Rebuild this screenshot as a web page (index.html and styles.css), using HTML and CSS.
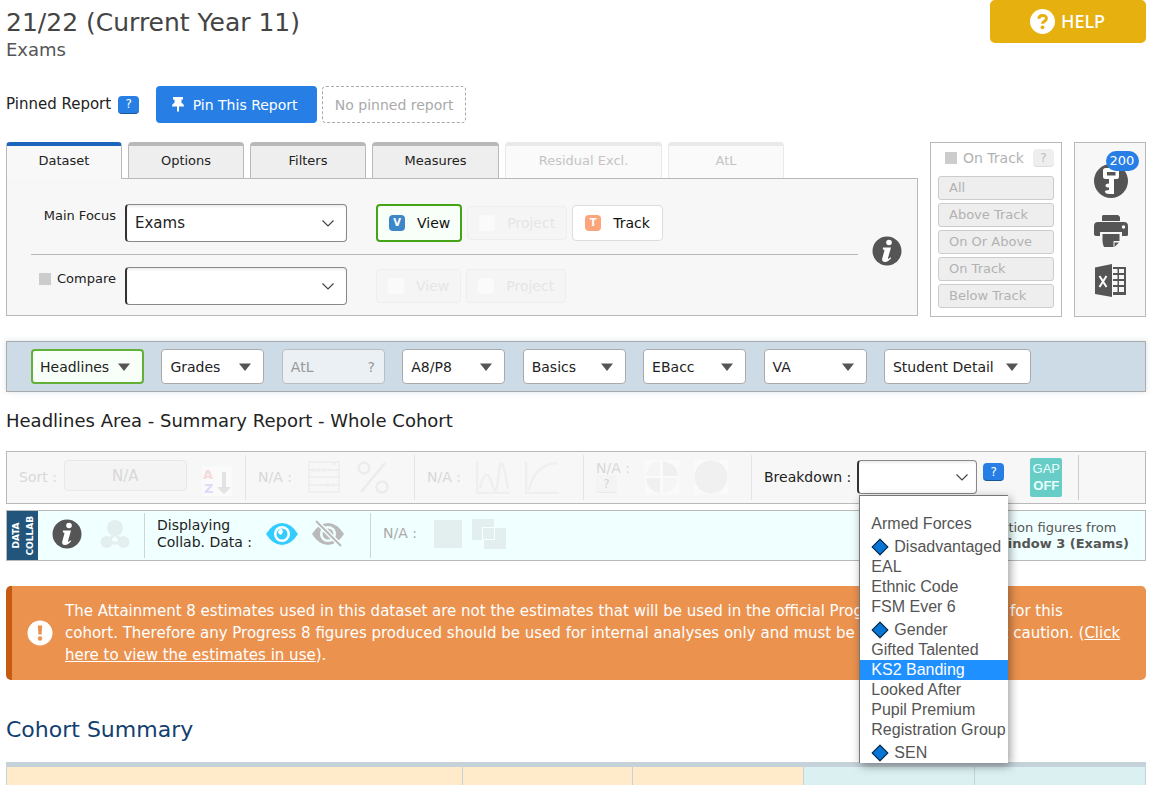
FILE: index.html
```html
<!DOCTYPE html>
<html lang="en">
<head>
<meta charset="utf-8">
<title>21/22 (Current Year 11) - Exams</title>
<link rel="stylesheet" href="styles.css">
</head>
<body>
<svg class="defs" aria-hidden="true">
  <symbol id="info" viewBox="0 0 30 30"><circle cx="15" cy="15" r="14.5" fill="#555"/><circle cx="17" cy="6.500" r="2.800" fill="#fff"/><path d="M11 11.500h8l-3 10.500c-.3 1.300.6 1 2.400-.8l.8.8c-2 2.800-4 4-6.200 4-2.500 0-3.300-1.500-2.700-3.800l2-7.200c.3-1.200 0-1.500-1.500-1.500z" fill="#fff"/></symbol>
  <symbol id="caret" viewBox="0 0 12 8"><path d="M0 .5h12L6 8z" fill="#555"/></symbol>
</svg>
<header class="top">
  <div>
    <h1>21/22 (Current Year 11)</h1>
    <p class="sub">Exams</p>
  </div>
  <button class="help" type="button"><svg width="25" height="25" viewBox="0 0 25 25"><circle cx="12.500" cy="12.500" r="12.500" fill="#fff"/><path d="M8.800 9.800c.2-4.600 7.600-4.400 7.600-.3 0 2.900-3.900 2.500-3.900 5.300" fill="none" stroke="#e6b00e" stroke-width="3"/><circle cx="12.500" cy="18.300" r="1.900" fill="#e6b00e"/></svg>HELP</button>
</header>

<div class="pinned">
  <span>Pinned Report</span>
  <button class="q" type="button">?</button>
  <button class="pin" type="button"><svg width="12" height="15" viewBox="0 0 12 15"><path d="M1 0h10v2.500H9.500V6c1.500.6 2.500 1.700 2.500 3.500H7V14l-1 1-1-1V9.500H0C0 7.700 1 6.600 2.500 6V2.500H1z" fill="#fff"/></svg>Pin This Report</button>
  <span class="nopin">No pinned report</span>
</div>

<div class="main">
  <section class="left">
    <div class="tabs" role="tablist">
      <button class="tab on" role="tab" type="button">Dataset</button>
      <button class="tab" role="tab" type="button">Options</button>
      <button class="tab" role="tab" type="button">Filters</button>
      <button class="tab wide" role="tab" type="button">Measures</button>
      <button class="tab wider" role="tab" type="button" disabled>Residual Excl.</button>
      <button class="tab" role="tab" type="button" disabled>AtL</button>
    </div>
    <div class="panel">
      <div class="rows">
        <div class="row">
          <label for="focus">Main Focus</label>
          <select id="focus" class="sel"><option>Exams</option></select>
          <div class="modes">
            <button class="mode active" type="button"><span class="tag blue">V</span>View</button>
            <button class="mode" type="button" disabled><span class="tag"></span>Project</button>
            <button class="mode" type="button"><span class="tag orange">T</span>Track</button>
          </div>
        </div>
        <div class="row">
          <label for="cmp"><input class="box" type="checkbox" disabled aria-label="Enable compare">Compare</label>
          <select id="cmp" class="sel"><option></option></select>
          <div class="modes">
            <button class="mode" type="button" disabled><span class="tag"></span>View</button>
            <button class="mode" type="button" disabled><span class="tag"></span>Project</button>
          </div>
        </div>
      </div>
      <svg class="ico30"><use href="#info"/></svg>
    </div>
  </section>
  <section class="track">
    <div class="trackhead"><label><input class="box" type="checkbox" disabled>On Track</label><button class="q off" type="button" disabled>?</button></div>
    <button type="button" disabled>All</button>
    <button type="button" disabled>Above Track</button>
    <button type="button" disabled>On Or Above</button>
    <button type="button" disabled>On Track</button>
    <button type="button" disabled>Below Track</button>
  </section>
  <section class="tools">
    <button type="button" class="key" aria-label="Key"><svg width="34" height="34" viewBox="0 0 34 34"><circle cx="17" cy="17" r="17" fill="#555"/><path d="M11.500 4h11q2.500 0 2.500 2.500v6q0 2.500-2.500 2.500H20v15h-4q-5 0-5-2.500 0-1.500 4-1.500v-2.500q-3.500 0-3.500-2t3.500-2V15h-3.500Q9 15 9 12.500v-6Q9 4 11.500 4z" fill="#fff"/><path d="M13 8h8.500v3.500H13z" fill="#555"/></svg><span class="badge">200</span></button>
    <button type="button" aria-label="Print"><svg width="34" height="32" viewBox="0 0 34 32"><path d="M9 0h15l2 2v4H8V1zM4 7h26q4 0 4 4v9q0 1-2 1h-4v-4H6v4H2q-2 0-2-2v-8q0-4 4-4z" fill="#555"/><circle cx="29.500" cy="12" r="1.700" fill="#fff"/><path d="M8.500 19h17v7h-6v6H10q-1.500-3-1.500-6zM20.500 27.500H25L20.500 32z" fill="#555"/></svg></button>
    <button type="button" aria-label="Export to Excel"><svg width="32" height="34" viewBox="0 0 32 34"><path d="M0 3.500 17 0v33L0 30zM18 3h13v28H18z" fill="#555"/><path d="M18 5h4.500v4H18zm6 0h5v4h-5zM18 11h4.500v4H18zm6 0h5v4h-5zM18 17h4.500v4H18zm6 0h5v4h-5zM18 23h4.500v5H18zm6 0h5v5h-5z" fill="#f7f7f7"/><path d="m4.500 12 7 11m0-11-7 11" stroke="#fff" stroke-width="2"/></svg></button>
  </section>
</div>

<nav class="areas">
  <button class="area active" type="button">Headlines<svg width="12" height="8"><use href="#caret"/></svg></button>
  <button class="area" type="button">Grades<svg width="12" height="8"><use href="#caret"/></svg></button>
  <button class="area" type="button" disabled>AtL<span>?</span></button>
  <button class="area" type="button">A8/P8<svg width="12" height="8"><use href="#caret"/></svg></button>
  <button class="area" type="button">Basics<svg width="12" height="8"><use href="#caret"/></svg></button>
  <button class="area" type="button">EBacc<svg width="12" height="8"><use href="#caret"/></svg></button>
  <button class="area" type="button">VA<svg width="12" height="8"><use href="#caret"/></svg></button>
  <button class="area big" type="button">Student Detail<svg width="12" height="8"><use href="#caret"/></svg></button>
</nav>

<h2>Headlines Area - Summary Report - Whole Cohort</h2>

<div class="bar">
  <div class="cell sort"><span>Sort :</span><button class="na" type="button" disabled>N/A</button>
    <svg width="30" height="30" viewBox="0 0 30 30"><rect width="30" height="30" fill="#fafafa"/><text x="1" y="13" class="az" fill="#f6d9db">A</text><text x="2" y="27" class="az" fill="#dcdcf6">Z</text><path d="M20 6h4v15h5l-7 7-7-7h5z" fill="#e2e2e2"/></svg>
  </div>
  <div class="cell"><span>N/A :</span>
    <svg width="34" height="34" viewBox="0 0 34 34" fill="none" stroke="#efefef" stroke-width="2"><path d="M2 2h30v30H2zM2 10h30M2 17h30M2 25h30"/><g fill="#ececec"><circle cx="7" cy="10" r="1"/><circle cx="12" cy="10" r="1"/><circle cx="17" cy="10" r="1"/><circle cx="21" cy="25" r="1"/><circle cx="26" cy="25" r="1"/><circle cx="27" cy="3" r="1"/></g></svg>
    <svg width="34" height="34" viewBox="0 0 34 34" fill="none" stroke="#ececec" stroke-width="2.500"><circle cx="8" cy="8" r="5.500"/><circle cx="26" cy="27" r="5.500"/><path d="M29 3 5 32"/></svg>
  </div>
  <div class="cell"><span>N/A :</span>
    <svg width="34" height="34" viewBox="0 0 34 34" fill="none" stroke="#efefef" stroke-width="2.500"><path d="M1 1v32h33M4 29C8 11 12 11 16 24s5 5 7-12 5-8 9 17"/></svg>
    <svg width="34" height="34" viewBox="0 0 34 34" fill="none" stroke="#efefef" stroke-width="2.500"><path d="M1 1v32h33M4 30Q10 4 32 3"/></svg>
  </div>
  <div class="cell"><span class="stack">N/A :<button class="q off faint" type="button" disabled>?</button></span>
    <svg width="34" height="34" viewBox="0 0 34 34"><rect width="34" height="34" fill="#fafafa"/><path d="M18 16V1q14 2 15 15zM15 18v15Q2 31 1 18z" fill="#f0f0f0"/><path d="M15 16V1Q2 3 1 16zM18 18v15q14-2 15-15z" fill="#f5f5f5"/></svg>
    <svg width="34" height="34" viewBox="0 0 34 34"><rect width="34" height="34" fill="#fafafa"/><circle cx="17" cy="17" r="16.500" fill="#f0f0f0"/></svg>
  </div>
  <div class="cell live"><label for="brk">Breakdown :</label>
    <div class="pick"><select id="brk" class="sel"><option></option></select>
      <ul class="menu" role="listbox" aria-label="Breakdown">
        <li class="blank" role="option"></li>
        <li role="option">Armed Forces</li>
        <li class="gem" role="option">Disadvantaged</li>
        <li role="option">EAL</li>
        <li role="option">Ethnic Code</li>
        <li role="option">FSM Ever 6</li>
        <li class="gem" role="option">Gender</li>
        <li role="option">Gifted Talented</li>
        <li class="hot" role="option" aria-selected="true">KS2 Banding</li>
        <li role="option">Looked After</li>
        <li role="option">Pupil Premium</li>
        <li role="option">Registration Group</li>
        <li class="gem" role="option">SEN</li>
      </ul>
    </div>
    <button class="q up" type="button">?</button>
    <button class="gap" type="button">GAP<b>OFF</b></button>
  </div>
  <div class="cell"></div>
</div>

<div class="collab">
  <div class="side"><span>DATA<br>COLLAB</span></div>
  <div class="ccell c1"><svg class="ico30"><use href="#info"/></svg>
    <svg width="30" height="30" viewBox="0 0 30 30" fill="#e3efef"><circle cx="15" cy="9" r="8"/><circle cx="6.500" cy="23" r="6"/><circle cx="23.500" cy="23" r="6"/><path d="M15 15 7 23m8-8 8 8M8 24h14" stroke="#e3efef" stroke-width="3"/></svg></div>
  <div class="ccell c2"><span>Displaying<br>Collab. Data :</span>
    <svg width="32" height="24" viewBox="0 0 32 24"><path d="M0 12Q7 1 16 1t16 11q-7 11-16 11T0 12z" fill="#3cf"/><circle cx="16" cy="12" r="8" fill="#fff"/><circle cx="16" cy="12" r="5.500" fill="#3cf"/><path d="M12 11q0-4 4-4l1 3-2 3z" fill="#fff"/></svg>
    <svg width="32" height="28" viewBox="0 0 32 28"><path d="M0 14Q7 3 16 3t16 11q-7 11-16 11T0 14z" fill="#bababa"/><circle cx="16" cy="14" r="8" fill="#f0ffff"/><circle cx="16" cy="14" r="5.500" fill="#bababa"/><path d="m4 1 25 25" stroke="#f0ffff" stroke-width="5"/><path d="m4 1 25 25" stroke="#bababa" stroke-width="2"/></svg></div>
  <div class="ccell c3"><span>N/A :</span>
    <svg width="30" height="30"><rect x="1" y="1" width="28" height="28" fill="#e3efef"/></svg>
    <svg width="34" height="32"><path d="M0 1h22v21H0zM12 10h22v21H12z" fill="#e3efef"/><path d="M10.500 9.500h12v12h-12z" fill="#e3efef" stroke="#f7ffff"/></svg></div>
  <p class="window">Collaboration figures from<br><b>Year 11 Window 3 (Exams)</b></p>
</div>

<div class="alert">
  <svg width="26" height="26" viewBox="0 0 26 26"><circle cx="13" cy="13" r="12.500" fill="#fff"/><path d="M10.800 5.500h4.400l-.6 9h-3.200z" fill="#eb924f"/><circle cx="13" cy="18.500" r="2.200" fill="#eb924f"/></svg>
  <p>The Attainment 8 estimates used in this dataset are not the estimates that will be used in the official Progress 8 benchmarks for this<br>cohort. Therefore any Progress 8 figures produced should be used for internal analyses only and must be treated with utmost caution. (<a href="#estimates">Click<br>here to view the estimates in use</a>).</p>
</div>

<h3>Cohort Summary</h3>
<table class="summary"><tr><td class="w y"></td><td class="y"></td><td class="y"></td><td></td><td></td></tr></table>
</body>
</html>
```

FILE: styles.css
```css
* { box-sizing: border-box; }
body { margin: 0; padding: 0 5px 0 6px; font: 14px/18px "DejaVu Sans", sans-serif; color: #222; background: #fff; }
button, select, input { font: inherit; color: inherit; margin: 0; }
button { display: flex; align-items: center; justify-content: center; padding: 0; border: 0; background: none; white-space: nowrap; }
h1, h2, h3, p, ul { margin: 0; padding: 0; font-weight: normal; }
svg { display: block; flex: none; }
.defs { position: absolute; width: 0; height: 0; }
.ico30 { width: 30px; height: 30px; }

.top { display: flex; justify-content: space-between; align-items: flex-start; }
h1 { font-size: 25px; line-height: 28px; padding-top: 9px; color: #444; }
.sub { font-size: 18px; line-height: 26px; color: #555; }
.help { width: 156px; height: 43px; gap: 6px; padding: 0 1px 1px 0; border-radius: 5px; background: #e6b00e; color: #fff; font: 18px "Noto Sans", sans-serif; font-weight: 500; }

.pinned { display: flex; align-items: center; height: 37px; margin-top: 23px; font-size: 15px; }
.pinned > span:first-child { padding-bottom: 2px; }
.q { width: 21px; height: 18px; border-radius: 4px; border-bottom: 1px solid #1a5696; background: #277fe5; color: #fff; font-size: 12px; }
.pinned .q { margin: 0 17px 0 7px; }
.pin { width: 161px; height: 37px; gap: 9px; padding-right: 4px; border-radius: 4px; background: #277fe5; color: #fff; font-size: 14px; }
.nopin { display: flex; align-items: center; justify-content: center; width: 144px; height: 37px; margin-left: 5px; border: 1px dashed #aaa; border-radius: 4px; color: #aaa; font-size: 14px; }

.main { display: flex; gap: 12px; margin-top: 19px; align-items: stretch; }
.left { flex: 1; display: flex; flex-direction: column; }
.tabs { display: flex; gap: 6px; height: 37px; margin-bottom: -1px; align-items: flex-start; }
.tab { width: 116px; height: 36px; padding-bottom: 2px; border: 1px solid #b9b9b9; border-top-width: 4px; border-bottom: 0; border-radius: 4px 4px 0 0; background: #eee; font-size: 13px; }
.tab.on { position: relative; height: 37px; padding-bottom: 3px; border-top-color: #1b65bf; background: #f8f8f8; }
.tab.wide { width: 127px; }
.tab.wider { width: 157px; }
.tab:disabled { border-color: #e9e9e9; background: #fafafa; color: #c4c4c4; }
.panel { flex: 1; display: flex; gap: 14px; padding: 0 15px 0 24px; border: 1px solid #b9b9b9; background: #f7f7f7; margin-bottom: 1px; }
.panel > svg { margin-top: 57px; }
.rows { flex: 1; }
.row { display: flex; align-items: flex-start; padding: 25px 0 12px; }
.row + .row { border-top: 1px solid #b9b9b9; padding: 12px 0 10px; }
.row label { display: flex; justify-content: flex-end; align-items: center; gap: 6px; width: 85px; margin-right: 9px; padding-top: 3px; font-size: 13px; white-space: nowrap; }
.box { appearance: none; width: 12px; height: 12px; background: #ccc; }
.sel { appearance: none; width: 222px; height: 38px; padding: 0 8px; border: 1px solid #888; border-left: 2px solid #333; border-radius: 4px; color: #222; font-size: 15px; background: #fff url("data:image/svg+xml,%3Csvg xmlns='http://www.w3.org/2000/svg' width='12' height='7'%3E%3Cpath d='M.5.5 6 6 11.500.5' fill='none' stroke='%23444' stroke-width='1.200'/%3E%3C/svg%3E") no-repeat right 12px center; box-shadow: inset 0 2px 2px #f2eeee; }
.modes { display: flex; align-items: center; gap: 5px; height: 38px; margin-left: 29px; }
.mode { height: 36px; padding: 0 12px; gap: 12px; border: 1px solid #ddd; border-radius: 4px; background: #fff; color: #111; }
.mode.active { height: 38px; padding: 0 10px 0 11px; border: 2px solid #45a415; background: #f8fff8; }
.mode:disabled { height: 34px; padding: 0 11px; background: #f5f5f5; border-color: #eee; color: #e5e5e5; }
.tag { width: 16px; height: 16px; border-radius: 4px; background: #fafafa; font: bold 10px/16px "DejaVu Sans", sans-serif; color: #fff; }
.blue { background: #3b87c8; }
.orange { background: #fca47c; }

.track { width: 132px; display: flex; flex-direction: column; gap: 3px; padding: 6px 7px 8px; border: 1px solid #b9b9b9; color: #b2b2b2; }
.trackhead { display: flex; justify-content: space-between; height: 24px; padding-left: 7px; }
.trackhead label { display: flex; align-items: center; gap: 6px; height: 18px; }
.q.off { background: #eee; color: #bbb; border-color: #ddd; }
.track > button { height: 24px; justify-content: flex-start; padding: 0 10px; border: 1px solid #ccc; border-radius: 3px; background: #eee; color: #b2b2b2; font-size: 13px; }
.tools { width: 72px; display: flex; flex-direction: column; align-items: center; gap: 17px; padding: 21px 0 0 1px; border: 1px solid #b9b9b9; background: #f7f7f7; }
.key { position: relative; }
.badge { position: absolute; top: -13px; left: 12px; width: 33px; height: 20px; border-radius: 10px; background: #277fe5; color: #fff; font-size: 13px; line-height: 20px; text-align: center; }

.areas { display: flex; justify-content: space-between; padding: 7px 10% 7px 24px; margin-top: 24px; border: 1px solid #aaa; background: #cddbe6; box-shadow: 0 0 6px #dde3e8; }
.area { justify-content: space-between; width: 103px; height: 35px; padding: 0 12px 0 8px; border: 1px solid #aaa; border-radius: 4px; background: #fff; }
.area.active { width: 113px; padding-left: 7px; border: 2px solid #63b039; background: #f8fff8; }
.area.big { width: 147px; }
.area:disabled { padding-right: 9px; background: #ebf0f4; border-color: #b7bfc5; color: #999; }

h2 { padding: 18px 0 19px; font-size: 18px; line-height: 22px; color: #222; }
.bar { display: grid; grid-template-columns: 239fr 169fr 169fr 168fr 327fr 66fr; height: 53px; border: 1px solid #b9b9b9; background: #f7f7f7; padding: 3px 0; color: #d8d8d8; }
.cell { display: flex; align-items: center; gap: 15px; padding: 0 0 1px 12px; border-right: 1px solid #e4e4e4; min-width: 0; white-space: nowrap; }
.cell:last-child { border: 0; }
.sort { gap: 7px; }
.sort svg { margin-left: 8px; margin-top: 8px; }
.na { width: 123px; height: 31px; margin-bottom: 3px; border: 1px solid #e8e8e8; border-radius: 4px; background: #f4f4f4; color: #d8d8d8; font-size: 15px; }
.az { font: bold 13px "DejaVu Sans", sans-serif; }
.stack { line-height: 14px; }
.q.faint { background: #f4f4f4; color: #d5d5d5; border-color: #e8e8e8; }
.live { color: #222; gap: 6px; border-color: #ccc; }
.pick { position: relative; }
.pick .sel { display: block; width: 120px; height: 34px; background-position: right 8px center; }
.menu { position: absolute; z-index: 2; top: 35px; left: 2px; width: 149px; list-style: none; border: 1px solid #767676; background: #fff; box-shadow: 2px 3px 9px rgba(0, 0, 0, .4); color: #545454; font: 16px/20px "Liberation Sans", sans-serif; border-right: 0; border-bottom: 0; }
.menu li { height: 20px; padding-left: 11px; }
.menu .blank { height: 18px; }
.menu .gem { display: flex; gap: 8px; height: 23px; padding: 3px 0 0 13px; }
.gem::before { content: ""; width: 10px; height: 10px; margin: 4px 0 0 1px; background: #0874d5; border: 1px solid #123; transform: rotate(45deg); }
.menu .hot { background: #1e90ff; color: #fff; }
.q.up { margin-bottom: 10px; }
.gap { flex-direction: column; width: 32px; height: 39px; margin-left: 20px; background: #68cdc6; border-radius: 2px; color: #e8ffff; font: 13px/17px "Liberation Sans", sans-serif; }

.collab { display: flex; height: 51px; margin-top: 6px; border: 1px solid #b9b9b9; background: #f0ffff; }
.side { width: 31px; display: flex; align-items: center; justify-content: center; background: #22557c; color: #fff; font: bold 9px/14px "DejaVu Sans", sans-serif; }
.side span { writing-mode: vertical-rl; transform: rotate(180deg); text-align: center; }
.ccell { display: flex; align-items: center; gap: 18px; margin: 2px 0; padding-bottom: 4px; border-right: 1px solid #ccd6d6; line-height: 17px; white-space: nowrap; }
.c1 { width: 107px; padding-left: 14px; }
.c2 { width: 226px; padding-left: 12px; gap: 14px; }
.c3 { padding-left: 12px; gap: 16px; border: 0; color: #aaa; }
.c3 svg + svg { margin-left: -7px; }
.window { margin-left: auto; padding: 9px 16px 0 0; text-align: center; font-size: 13px; line-height: 16px; color: #555; white-space: nowrap; }

.alert { display: flex; align-items: center; gap: 12px; margin-top: 25px; padding: 14px 14px 14px 15px; border-left: 6px solid #c55a11; border-radius: 5px; background: #eb924f; color: #fff; font-size: 15px; line-height: 22px; }
.alert a { color: #fff; }
h3 { padding: 36px 0 18px; font-size: 22px; line-height: 28px; color: #123f70; }
.summary { width: 100%; table-layout: fixed; border-collapse: collapse; border-top: 5px solid #c5d2da; }
.summary td { height: 20px; padding: 0; width: 15%; border: solid #c5d2da; border-width: 0 1px; background: #dbf1f1; }
.summary .w { width: 40%; }
.summary .y { background: #ffebc9; }
```
